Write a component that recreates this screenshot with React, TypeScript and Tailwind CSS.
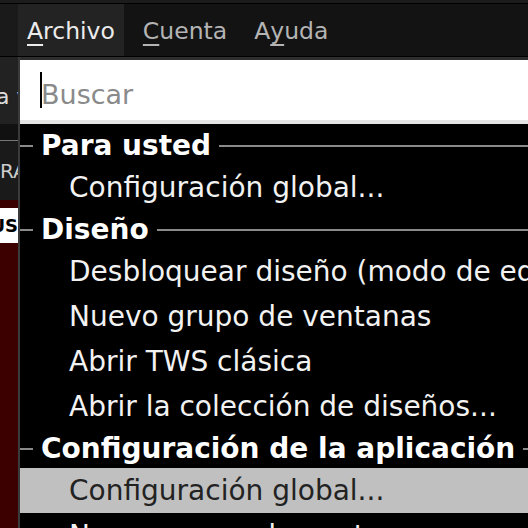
import type { ReactNode } from 'react'

const font = { fontFamily: '"DejaVu Sans", Verdana, sans-serif' }

type Row = { kind: 'header'; label: string } | { kind: 'item'; label: string; active?: boolean }

const rows: Row[] = [
    { kind: 'header', label: 'Para usted' },
    { kind: 'item', label: 'Configuración global...' },
    { kind: 'header', label: 'Diseño' },
    { kind: 'item', label: 'Desbloquear diseño (modo de edición)' },
    { kind: 'item', label: 'Nuevo grupo de ventanas' },
    { kind: 'item', label: 'Abrir TWS clásica' },
    { kind: 'item', label: 'Abrir la colección de diseños...' },
    { kind: 'header', label: 'Configuración de la aplicación' },
    { kind: 'item', label: 'Configuración global...', active: true },
    { kind: 'item', label: 'Nuevo grupo de ventanas' },
]

function MenuTitle({ mnemonic, rest, active, before }: { mnemonic: string; rest: string; active?: boolean; before?: string }) {
    return (
        <div
            className={`flex h-full items-center px-[9px] pt-[4px] text-[23.5px] ${active ? 'bg-[#232323] text-[#ececec]' : 'text-[#b4b4b4]'}`}
        >
            {before}
            <span className="underline decoration-2 underline-offset-[5px]">{mnemonic}</span>
            {rest}
        </div>
    )
}

function Header({ children }: { children: ReactNode }) {
    return (
        <div className="flex h-[39px] items-center">
            <div className="h-[2px] w-[13px] bg-[#8a8a8a]" />
            <span className="whitespace-nowrap px-2 text-[28px] font-bold leading-none text-white">{children}</span>
            <div className="h-[2px] flex-1 bg-[#8a8a8a]" />
        </div>
    )
}

export default function App() {
    return (
        <div className="relative h-[528px] w-[528px] overflow-hidden bg-black" style={font}>
            {/* menubar */}
            <div className="h-[3px] bg-[#1c1c1c]" />
            <div className="flex h-[53px] border-t border-black bg-[#131313]">
                <div className="w-[18px] bg-[#1a1a1a]" />
                <MenuTitle mnemonic="A" rest="rchivo" active />
                <div className="w-[10px]" />
                <MenuTitle mnemonic="C" rest="uenta" />
                <div className="w-[9px]" />
                <MenuTitle before="A" mnemonic="y" rest="uda" />
            </div>
            <div className="h-[1px] bg-black" />

            {/* left side panel behind menu */}
            <div className="flex h-[471px]">
                <div className="flex w-[18px] flex-col overflow-hidden text-[22px]">
                    <div className="flex h-[67px] items-center whitespace-nowrap bg-[#222] pt-[12px] text-[#ddd]">
                        <span className="-ml-[4px]">a&nbsp;v</span>
                    </div>
                    <div className="h-[16px] bg-[#111]" />
                    <div className="h-[1px] bg-[#777]" />
                    <div className="flex h-[59px] items-center whitespace-nowrap bg-[#1a1a1a] text-[20px] text-[#ccc]">RA</div>
                    <div className="h-[8px] bg-[#3a0000]" />
                    <div className="flex h-[35px] items-center justify-end whitespace-nowrap bg-white text-[18px] font-bold leading-none text-black">
                        US
                    </div>
                    <div className="flex-1 bg-[#3c0000]" />
                </div>
                <div className="w-[2px] bg-[#3a3a3a]" />
            </div>

            {/* dropdown */}
            <div className="absolute left-[20px] top-[57px] w-[560px] border-t-[3px] border-[#2e2e2e] bg-black">
                <div className="flex h-[60px] items-center bg-white pl-[20px]">
                    <div className="h-[36px] w-[2px] bg-black" />
                    <span className="-ml-[1px] mt-[10px] text-[27px] text-[#8a8a8a]">Buscar</span>
                </div>
                <div className="h-[4px] bg-[#e4e4e4]" />
                <div className="pt-[2px]">
                    {rows.map((row, i) =>
                        row.kind === 'header' ? (
                            <Header key={i}>{row.label}</Header>
                        ) : (
                            <div
                                key={i}
                                className={`flex h-[45px] items-center whitespace-nowrap pl-[49px] text-[28px] ${row.active ? 'bg-[#c0c0c0] text-[#222]' : 'text-[#f2f2f2]'}`}
                            >
                                {row.label}
                            </div>
                        ),
                    )}
                </div>
            </div>
        </div>
    )
}
